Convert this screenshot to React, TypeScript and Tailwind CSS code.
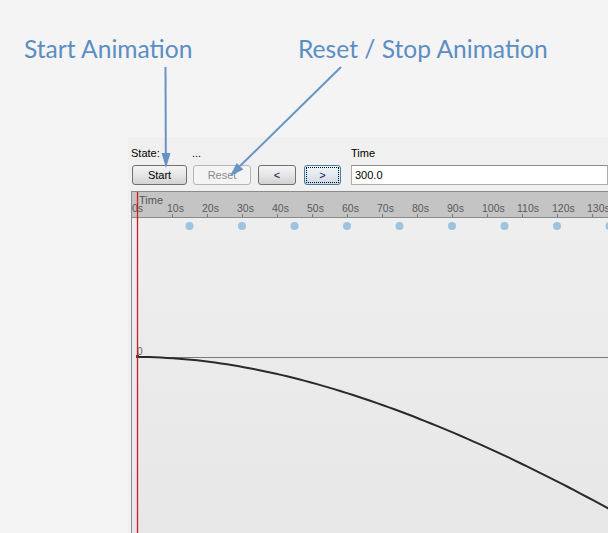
import React from "react";

const ui = { fontFamily: '"Liberation Sans", Arial, sans-serif' };

function curvePath() {
  const pts: string[] = [];
  const a = 0.000976;
  const b = 0.000916;
  for (let dx = 0; dx <= 480; dx += 6) {
    const y = 166 + (a * dx * dx) / (1 + b * dx);
    pts.push(`${(6 + dx).toFixed(1)},${y.toFixed(1)}`);
  }
  return "M" + pts.join(" L");
}

function Chart() {
  const ticks = Array.from({ length: 14 }, (_, i) => i);
  const dots = Array.from({ length: 9 }, (_, i) => i + 1);
  return (
    <div className="relative ml-[3px] mt-[6px] h-[342px] flex-1 border-l border-[#8c8c98] bg-linear-to-b from-[#efefef] to-[#e7e7e7]">
      <div className="h-[27px] border-t border-b border-[#8a8a8a] bg-[#c4c4c4]" />
      <svg
        className="absolute left-[-1px] top-0"
        width="478"
        height="342"
        viewBox="0 0 478 342"
        style={ui}
      >
        <text x="8" y="13" fontSize="11" fill="#555">Time</text>
        {ticks.map((i) => (
          <g key={i}>
            {i > 0 && (
              <line x1={6 + 35 * i + 0.5} y1="23" x2={6 + 35 * i + 0.5} y2="26" stroke="#777" strokeWidth="1" />
            )}
            <text x={1 + 35 * i} y="21" fontSize="10.5" fill="#5a5a5a">
              {i * 10}s
            </text>
          </g>
        ))}
        {dots.map((k) => (
          <circle key={k} cx={6 + 52.5 * k} cy="35" r="4" fill="#9dc3de" />
        ))}
        <line x1="6" y1="166.5" x2="478" y2="166.5" stroke="#7a7a7a" strokeWidth="1" />
        <text x="6" y="164" fontSize="10" fill="#666">0</text>
        <rect x="5" y="164" width="3" height="3" fill="#444" />
        <path d={curvePath()} fill="none" stroke="#2a2a2a" strokeWidth="2" />
        <line x1="6.5" y1="1" x2="6.5" y2="342" stroke="#cc2020" strokeWidth="1.3" />
      </svg>
    </div>
  );
}

export default function App() {
  return (
    <div className="relative h-[533px] w-[608px] overflow-hidden bg-[#f4f4f4]">
      <div className="flex h-full flex-col pl-[128px] pt-[137px]">
        <div className="flex h-full flex-col bg-[#f0f0f0]" style={ui}>
          <div className="flex h-[28px] pl-[3px] pt-[10px] text-[11px] leading-[13px] text-black">
            <span className="w-[61px]">State:</span>
            <span className="w-[159px]">...</span>
            <span>Time</span>
          </div>
          <div className="flex h-[20px] items-stretch pl-[4px] text-[11px]">
            <button className="w-[55px] rounded-[3px] border border-[#707070] bg-linear-to-b from-[#f4f4f4] via-[#e6e6e6] to-[#d2d2d2] text-black">
              Start
            </button>
            <button className="ml-[6px] w-[58px] rounded-[3px] border border-[#b3b6b8] bg-[#f4f4f4] text-[#8a8a8a]">
              Reset
            </button>
            <button className="ml-[7px] w-[38px] rounded-[3px] border border-[#707070] bg-linear-to-b from-[#f4f4f4] via-[#e6e6e6] to-[#d2d2d2] text-[#10105a]">
              &lt;
            </button>
            <button className="ml-[8px] flex w-[37px] rounded-[3px] border border-[#3c7fb1] bg-linear-to-b from-[#eef4f8] via-[#e2eaf0] to-[#cfd8de] p-[1px]">
              <span className="flex flex-1 items-center justify-center border border-dotted border-black text-[#10105a]">
                &gt;
              </span>
            </button>
            <div className="ml-[10px] flex flex-1 items-center border border-[#abadb3] border-t-[#8a8d94] bg-white pl-[3px] text-[11px] text-black">
              300.0
            </div>
          </div>
          <div className="flex">
            <Chart />
          </div>
        </div>
      </div>

      <div
        className="absolute left-[24px] top-[37px] text-[24.6px] leading-[24px] text-[#5b8ec2]"
        style={{ fontFamily: 'Lato, "Open Sans", sans-serif' }}
      >
        Start Animation
      </div>
      <div
        className="absolute left-[298px] top-[37px] text-[24.6px] leading-[24px] text-[#5b8ec2]"
        style={{ fontFamily: 'Lato, "Open Sans", sans-serif' }}
      >
        Reset / Stop Animation
      </div>
      <svg className="pointer-events-none absolute left-0 top-0" width="608" height="533">
        <line x1="165.5" y1="67" x2="165.8" y2="154" stroke="#6794c4" strokeWidth="2" />
        <polygon points="166,168 161.5,153 170.5,153" fill="#6794c4" />
        <line x1="341" y1="67" x2="240" y2="166" stroke="#6794c4" strokeWidth="2" />
        <polygon points="230,176 243.3,169.4 236.8,163" fill="#6794c4" />
      </svg>
    </div>
  );
}
